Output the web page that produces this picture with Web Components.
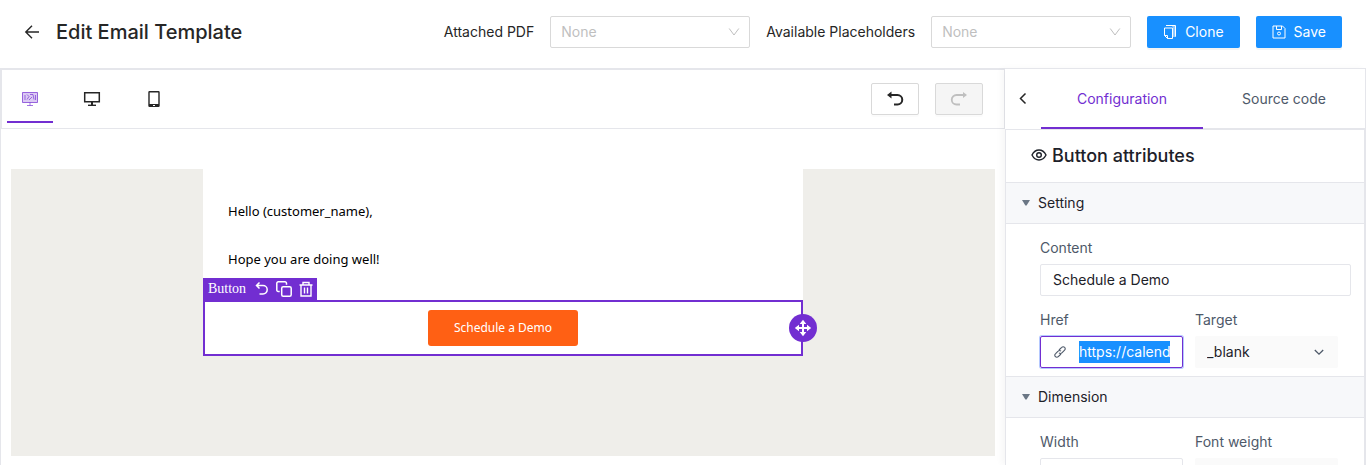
<!DOCTYPE html>
<html lang="en">
<head>
<meta charset="utf-8">
<title>Edit Email Template</title>
<style>
  html, body { margin: 0; height: 100%; }
  body {
    overflow: hidden;
    background: #fff;
    color: #262626;
    font: 14px/22px Inter, "Liberation Sans", sans-serif;
    font-optical-sizing: none;
    --purple: #722ed1;
    --blue: #1890ff;
    --line: #e5e6eb;
    --muted: #4e5969;
  }
</style>
</head>
<body>
<editor-app></editor-app>

<script>
const ICONS = {
  back: '<svg viewBox="0 0 16 16" width="16" height="16" fill="none" stroke="currentColor" stroke-width="1.4"><path d="M15 8H2M8 1.8 1.8 8 8 14.2"/></svg>',
  down: '<svg viewBox="0 0 12 12" width="12" height="12" fill="none" stroke="currentColor" stroke-width="1"><path d="M1.2 2.5 6 9l4.8-6.5"/></svg>',
  caret: '<svg viewBox="0 0 12 12" width="12" height="12" fill="none" stroke="currentColor" stroke-width="1.3"><path d="M1.8 4 6 8.2 10.2 4"/></svg>',
  clone: '<svg viewBox="0 0 14 14" width="14" height="14" fill="none" stroke="currentColor"><path fill="currentColor" fill-opacity=".5" stroke="none" d="M9 1h4v11h-3V3z"/><path d="M3 .5h9.500v11M1.500 3h8v10.500H4.500L1.500 10.500zM1.500 10.500h3v3"/></svg>',
  save: '<svg viewBox="0 0 14 14" width="14" height="14" fill="none" stroke="currentColor"><path d="M1 1h9.500L13 3.500V13H1zM4.500 1v3.500h5V1"/><circle cx="7" cy="8.500" r="1.500"/></svg>',
  mixed: '<svg viewBox="0 0 18 16" width="18" height="16" fill="none" stroke="currentColor" stroke-width="1"><path fill="currentColor" fill-opacity=".25" stroke-opacity=".7" d="M1.500 1.500h15v10h-15z"/><path d="M4 4v5M6 3.500l2 2-2 3M9 3.500h3l1 5M14.500 4v5M8 9l3-3M9 11.500v3M6 14.500h6" stroke-opacity=".65"/></svg>',
  desktop: '<svg viewBox="0 0 18 16" width="18" height="16" fill="none" stroke="currentColor"><path stroke-width="1.500" d="M1.700 1.700h14.600v9H1.700z"/><path d="M9 11v3.500" stroke-width="2"/><path d="M5 14.300h8" stroke-width="1.400"/></svg>',
  phone: '<svg viewBox="0 0 18 18" width="18" height="18"><path fill="currentColor" fill-rule="evenodd" d="M4.500 1h9A1.200 1.200 0 0 1 14.700 2.200v13.600A1.200 1.200 0 0 1 13.500 17h-9a1.200 1.200 0 0 1-1.200-1.200V2.200A1.200 1.200 0 0 1 4.500 1zM4.700 2.600v11.300h8.600V2.600zM8 15v1h2v-1z"/></svg>',
  undo: '<svg viewBox="0 0 18 18" width="18" height="18"><path d="M4 5h7.500a4.500 4.500 0 0 1 0 9.500H8" fill="none" stroke="currentColor" stroke-width="2"/><path d="M1 5l4.500-3.500v7z" fill="currentColor"/></svg>',
  redo: '<svg viewBox="0 0 18 18" width="18" height="18"><path d="M14 5H6.500a4.500 4.500 0 0 0 0 9.500H10" fill="none" stroke="currentColor" stroke-width="1.800"/><path d="M17 5l-4-3v6z" fill="currentColor"/></svg>',
  left: '<svg viewBox="0 0 14 14" width="14" height="14" fill="none" stroke="currentColor" stroke-width="1.500"><path d="M9.500 1.500 4.500 6.500l5 5"/></svg>',
  eye: '<svg viewBox="0 0 16 16" width="16" height="16" fill="none" stroke="currentColor" stroke-width="1.400"><path d="M1 7c1.600-3.200 4-5 7-5s5.400 1.800 7 5c-1.600 3.200-4 5-7 5s-5.400-1.800-7-5z"/><circle cx="8" cy="7" r="2.300"/></svg>',
  tri: '<svg viewBox="0 0 8 6" width="8" height="6"><path fill="currentColor" d="M0 0h8L4.600 5.500H3.400z"/></svg>',
  link: '<svg viewBox="0 0 14 14" width="14" height="14" fill="none" stroke="currentColor" stroke-width="1.100"><path d="M6 5 8.700 2.300a2 2 0 0 1 2.900 0 2 2 0 0 1 0 2.900L8.900 7.900a2 2 0 0 1-2.900 0M8 9l-2.700 2.700a2 2 0 0 1-2.900 0 2 2 0 0 1 0-2.900L5.100 6.100a2 2 0 0 1 2.900 0"/></svg>',
  undoSmall: '<svg viewBox="0 0 16 16" width="16" height="16" fill="none" stroke="currentColor" stroke-width="1.500"><path d="M5.500 1.500 2.500 4.500l3 3M2.500 4.500H9a4.200 4.200 0 0 1 0 8.400H5.500"/></svg>',
  copy: '<svg viewBox="0 0 16 16" width="16" height="16" fill="none" stroke="currentColor" stroke-width="1.500"><rect x="5.700" y="5.700" width="9.500" height="9.500" rx="1.500"/><path d="M3.700 10.500H2.300A1.400 1.400 0 0 1 .8 9V2.300A1.500 1.500 0 0 1 2.300.8H9a1.500 1.500 0 0 1 1.500 1.500v1.400"/></svg>',
  trash: '<svg viewBox="0 0 16 16" width="16" height="16" fill="none" stroke="currentColor" stroke-width="1.400"><path d="M1.500 4h13M5 4V1.500h6V4M3 4v11h10V4M6.500 6.500v6M9.500 6.500v6"/></svg>',
  move: '<svg viewBox="0 0 18 18" width="18" height="18"><path d="M9 3v12M3 9h12" stroke="currentColor" stroke-width="2"/><path fill="currentColor" d="M9 .8 12.300 5H5.700zM9 17.200 5.700 13h6.600zM.8 9 5 5.700v6.600zM17.200 9 13 12.300V5.700z"/></svg>'
};

const BASE = `*, *::before { box-sizing: border-box; }
  svg { display: block; flex: none; }
  button { font: inherit; color: inherit; margin: 0; padding: 0; border: 0; background: none; cursor: pointer; font-optical-sizing: none; }
  .icon { display: flex; align-items: center; }
  input, select { font: inherit; color: inherit; margin: 0; outline: 0; border-radius: 2px; font-optical-sizing: none; }`;

function define(name, render, ready) {
  customElements.define(name, class extends HTMLElement {
    connectedCallback() {
      if (this.shadowRoot) return;
      const root = this.attachShadow({ mode: 'open' });
      const t = document.createElement('template');
      t.innerHTML = `<style>${BASE}</style>${render(this)}`;
      root.append(t.content.cloneNode(true));
      if (ready) ready(root, this);
    }
  });
}

define('ui-icon', el => `<style>:host { display: inline-flex; flex: none; }</style>${ICONS[el.getAttribute('name')]}`);

define('action-button', el => `<style>
  :host { display: block; }
  button { display: flex; align-items: center; gap: 8px; height: 32px; padding: 0 16px; border-radius: 2px;
    background: var(--blue); color: #fff; box-shadow: 0 2px 0 rgba(0,0,0,.04); }
  </style><button type="button"><ui-icon name="${el.getAttribute('icon')}"></ui-icon><slot></slot></button>`);

define('header-select', el => `<style>
  :host { display: flex; align-items: center; gap: 16px; }
  .box { display: grid; width: 200px; align-items: center; }
  select { grid-area: 1 / 1; width: 100%; height: 32px; padding: 0 30px 0 10px; border: 1px solid #d9d9d9;
    appearance: none; background: #fff; color: #bfbfbf; }
  ui-icon { grid-area: 1 / 1; justify-self: end; margin-right: 10px; color: #bfbfbf; pointer-events: none; }
  </style><label for="s">${el.getAttribute('label')}</label>
  <span class="box"><select id="s"><option>None</option></select><ui-icon name="down"></ui-icon></span>`);

define('page-header', () => `<style>
  :host { display: flex; align-items: center; gap: 16px; min-height: 68px; padding: 12px 24px 16px; }
  h1 { margin: 0; font-size: 20px; line-height: 32px; font-weight: 500; flex: 1; }
  </style>
  <button type="button" class="icon" aria-label="Back"><ui-icon name="back"></ui-icon></button>
  <h1>Edit Email Template</h1>
  <header-select label="Attached PDF"></header-select>
  <header-select label="Available Placeholders"></header-select>
  <action-button icon="clone">Clone</action-button>
  <action-button icon="save">Save</action-button>`);

define('device-bar', () => `<style>
  :host { display: flex; justify-content: space-between; align-items: flex-start; height: 61px; padding: 0 21px 0 5px;
    border: solid var(--line); border-width: 2px 1px 1px 2px; }
  nav { display: flex; gap: 16px; }
  nav button { display: grid; place-items: center; width: 46px; height: 53px; padding-top: 6px; border-bottom: 2px solid transparent; }
  nav .on { color: var(--purple); border-color: var(--purple); }
  .history { display: flex; gap: 16px; padding-top: 13px; }
  .history button { display: grid; place-items: center; width: 48px; height: 32px; border: 1px solid #d9d9d9; border-radius: 2px;
    box-shadow: 0 2px 0 rgba(0,0,0,.015); }
  .history button:disabled { background: #f5f5f5; color: #bfbfbf; }
  </style>
  <nav>
    <button type="button" class="on" aria-label="Edit"><ui-icon name="mixed"></ui-icon></button>
    <button type="button" aria-label="Desktop preview"><ui-icon name="desktop"></ui-icon></button>
    <button type="button" aria-label="Mobile preview"><ui-icon name="phone"></ui-icon></button>
  </nav>
  <div class="history">
    <button type="button" aria-label="Undo"><ui-icon name="undo"></ui-icon></button>
    <button type="button" aria-label="Redo" disabled><ui-icon name="redo"></ui-icon></button>
  </div>`);

define('selected-block', () => `<style>
  :host { display: flex; justify-content: center; position: relative; padding: 8px; border: 2px solid var(--purple); }
  .tools { position: absolute; left: -2px; bottom: 100%; display: flex; align-items: center; gap: 6px; height: 24px; padding: 0 3px 2px 5px;
    background: var(--purple); color: #fff; font: 14px/22px "Liberation Serif", serif; }
  .tools span { margin-right: 2px; }
  .handle { position: absolute; right: -16px; top: 12px; display: grid; place-items: center; width: 28px; height: 28px;
    border-radius: 50%; background: var(--purple); color: #fff; }
  </style>
  <div class="tools"><span>Button</span>
    <button type="button" class="icon" aria-label="Select parent"><ui-icon name="undoSmall"></ui-icon></button>
    <button type="button" class="icon" aria-label="Copy"><ui-icon name="copy"></ui-icon></button>
    <button type="button" class="icon" aria-label="Delete"><ui-icon name="trash"></ui-icon></button>
  </div>
  <slot></slot>
  <button type="button" class="handle" aria-label="Move"><ui-icon name="move"></ui-icon></button>`);

define('email-canvas', () => `<style>
  :host { display: flex; flex: 1; min-height: 0; padding: 40px 10px 9px; border-left: 1px solid var(--line); }
  .stage { flex: 1; background: #efeeea; }
  .mail { max-width: 600px; margin: 0 auto; background: #fff; color: #000; font: 13px/24px "Noto Sans", "Open Sans", sans-serif; }
  .text { padding: 30px 25px 29px; }
  p { margin: 0 0 24px; }
  p:last-child { margin: 0; }
  .cta { height: 36px; min-width: 150px; padding: 0 24px; border-radius: 3px; background: #ff6014; color: #fff;
    font-size: 12px; line-height: 36px; text-align: center; text-decoration: none; }
  </style>
  <div class="stage"><div class="mail">
    <div class="text"><p>Hello (customer_name),</p><p>Hope you are doing well!</p></div>
    <selected-block><a class="cta" href="#">Schedule a Demo</a></selected-block>
  </div></div>`);

define('config-section', el => `<style>
  :host { display: block; }
  h3 { margin: 0; font-size: 14px; font-weight: 400; }
  h3 button { display: flex; align-items: center; gap: 8px; width: 100%; height: 42px; padding: 0 16px;
    background: #f7f8fa; border: solid var(--line); border-width: 1px 0; color: #1d2129; }
  h3 ui-icon { color: #6b7785; }
  .body { display: grid; gap: 12px; padding: 12px 13px 8px 34px; }
  </style>
  <h3><button type="button" aria-expanded="true"><ui-icon name="tri"></ui-icon>${el.getAttribute('heading')}</button></h3>
  <div class="body"><slot></slot></div>`);

define('form-row', () => `<style>
  :host { display: grid; grid-template-columns: 1fr 1fr; gap: 12px; margin-right: 13px; }
  </style><slot></slot>`);

define('form-field', el => {
  const kind = el.getAttribute('kind');
  const value = el.getAttribute('value') || '';
  const control = kind === 'select'
    ? `<select id="c"><option>${value}</option></select><ui-icon name="caret"></ui-icon>`
    : `${kind === 'link' ? '<ui-icon name="link"></ui-icon>' : ''}<input id="c" type="text" value="${value}">`;
  return `<style>
  :host { display: grid; gap: 4px; min-width: 0; }
  label { line-height: 24px; color: var(--muted); }
  .box { display: flex; align-items: center; height: 32px; min-width: 0; padding: 0 12px; border: 1px solid var(--line); border-radius: 2px; color: #1d2129; }
  input { flex: 1; min-width: 0; width: 0; height: 22px; padding: 0; border: 0; border-radius: 0; background: none; line-height: 22px; }
  input::selection { background: var(--blue); color: #fff; }
  select { flex: 1; min-width: 0; padding: 0; border: 0; background: none; appearance: none; }
  .select { background: #fafafa; border-color: transparent; padding-left: 11px; }
  .select ui-icon { color: var(--muted); }
  .link { gap: 12px; border-color: var(--purple); box-shadow: 0 0 0 1px #b5c9ff; }
  .link ui-icon { color: var(--muted); }
  </style><label for="c">${el.getAttribute('label')}</label><div class="box ${kind || ''}">${control}</div>`;
}, (root, el) => {
  if (el.hasAttribute('selected')) {
    const input = root.querySelector('input');
    input.focus({ preventScroll: true });
    input.select();
  }
});

define('config-panel', () => `<style>
  :host { display: flex; flex-direction: column; flex: 0 0 361px; min-height: 0; background: #fff; box-shadow: -4px 0 6px rgba(0,0,0,.03); }
  .top { display: flex; height: 62px; border: solid var(--line); border-width: 1px 1px 1px 0; }
  .fold { width: 36px; display: grid; place-items: center; }
  .tabs { display: flex; flex: 1; border-bottom: 1px solid var(--line); }
  .tabs button { flex: 1; margin-bottom: -1px; padding-top: 1px; color: var(--muted); border-bottom: 2px solid transparent; }
  .tabs .on { color: var(--purple); border-color: var(--purple); }
  .main { flex: 1; min-height: 0; overflow: hidden; border: solid var(--line); border-width: 0 2px 0 1px; }
  .title { display: flex; align-items: center; gap: 5px; height: 52px; padding-left: 25px; color: #1d2129; }
  h2 { margin: 0; font-size: 18px; line-height: 28px; font-weight: 500; }
  </style>
  <div class="top">
    <button type="button" class="fold" aria-label="Collapse"><ui-icon name="left"></ui-icon></button>
    <div class="tabs"><button type="button" class="on">Configuration</button><button type="button">Source code</button></div>
  </div>
  <div class="main">
    <div class="title"><ui-icon name="eye"></ui-icon><h2>Button attributes</h2></div>
    <config-section heading="Setting">
      <form-field label="Content" value="Schedule a Demo"></form-field>
      <form-row>
        <form-field label="Href" kind="link" value="https://calend" selected></form-field>
        <form-field label="Target" kind="select" value="_blank"></form-field>
      </form-row>
    </config-section>
    <config-section heading="Dimension">
      <form-row>
        <form-field label="Width"></form-field>
        <form-field label="Font weight" kind="select"></form-field>
      </form-row>
    </config-section>
  </div>`);

define('editor-app', () => `<style>
  :host { display: flex; flex-direction: column; height: 100vh; }
  .work { display: flex; flex: 1; min-height: 0; }
  main { display: flex; flex-direction: column; flex: 1; min-width: 0; }
  </style>
  <page-header></page-header>
  <div class="work"><main><device-bar></device-bar><email-canvas></email-canvas></main><config-panel></config-panel></div>`);
</script>
</body>
</html>
